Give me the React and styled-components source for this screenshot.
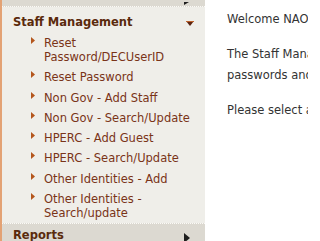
import React from "react";
import styled, {createGlobalStyle} from "styled-components";

const GlobalStyle = createGlobalStyle`
    html, body {
        margin: 0;
        padding: 0;
        background: #fff;
        overflow: hidden;
    }
    body {
        font-family: "DejaVu Sans", Verdana, sans-serif;
    }
`;

const Page = styled.div`
    display: flex;
    width: 308px;
    height: 241px;
    overflow: hidden;
`;

const Sidebar = styled.div`
    flex: 0 0 203px;
    background: #efeee9;
    border-left: 2px solid #e3a274;
    display: flex;
    flex-direction: column;
`;

const TopStrip = styled.div`
    position: relative;
    flex: 0 0 6px;
    background: #dcd9d1;
    border-bottom: 1px dotted #fbfaf7;
`;

const SectionHeader = styled.div`
    position: relative;
    flex: 0 0 auto;
    padding: ${props => (props.collapsed ? "3px 0 0 11px" : "7px 0 0 11px")};
    background: ${props => (props.collapsed ? "#dcd9d1" : "transparent")};
    border-top: ${props => (props.collapsed ? "1px dotted #fbfaf7" : "none")};
    font-size: 11.5px;
    line-height: 16px;
    font-weight: bold;
    color: #5a2a0c;
`;

const ArrowBox = styled.span`
    position: absolute;
    left: ${props => props.left}px;
    top: ${props => props.top}px;
    line-height: 0;
`;

const List = styled.ul`
    flex: 0 0 auto;
    list-style: none;
    margin: 0;
    padding: 3px 0 0 0;
`;

const Item = styled.li`
    display: flex;
    align-items: flex-start;
    gap: 9px;
    padding: 3px 0 3.25px 29px;
    font-size: 11.5px;
    line-height: 14px;
    color: #7a3418;
`;

const Bullet = styled.svg`
    flex: 0 0 4px;
    margin-top: 1px;
`;

const ItemText = styled.span`
    width: 148px;
`;

const Content = styled.div`
    flex: 1;
    padding: 9px 0 0 22px;
    font-size: 11.5px;
    line-height: 21px;
    color: #333;
    white-space: nowrap;
    overflow: hidden;
`;

const Para = styled.p`
    margin: 0 0 14px 0;
`;

const DownArrow = () => (
    <svg width="8" height="5" viewBox="0 0 8 5">
        <polygon points="0,0 8,0 4,5" fill="#5c2410" />
        <rect x="0" y="0" width="8" height="1" fill="#c0642c" />
    </svg>
);

const RightArrow = ({half}) =>
    half ? (
        <svg width="5" height="3" viewBox="0 0 5 3">
            <polygon points="0,0 5,0 0,3" fill="#1e1e1e" />
        </svg>
    ) : (
        <svg width="6" height="10" viewBox="0 0 6 10">
            <polygon points="0,0 6,5 0,10" fill="#1e1e1e" />
        </svg>
    );

const items = [
    "Reset Password/DECUserID",
    "Reset Password",
    "Non Gov - Add Staff",
    "Non Gov - Search/Update",
    "HPERC - Add Guest",
    "HPERC - Search/Update",
    "Other Identities - Add",
    "Other Identities - Search/update",
];

export default function App() {
    return (
        <>
            <GlobalStyle />
            <Page>
                <Sidebar>
                    <TopStrip>
                        <ArrowBox left={182} top={0}>
                            <RightArrow half />
                        </ArrowBox>
                    </TopStrip>
                    <SectionHeader>
                        Staff Management
                        <ArrowBox left={184} top={14}>
                            <DownArrow />
                        </ArrowBox>
                    </SectionHeader>
                    <List>
                        {items.map(label => (
                            <Item key={label}>
                                <Bullet width="4" height="7" viewBox="0 0 4 7">
                                    <polygon points="0,0 4,3.5 0,7" fill="#b4561c" />
                                </Bullet>
                                <ItemText>{label}</ItemText>
                            </Item>
                        ))}
                    </List>
                    <SectionHeader collapsed>
                        Reports
                        <ArrowBox left={182} top={9}>
                            <RightArrow />
                        </ArrowBox>
                    </SectionHeader>
                </Sidebar>
                <Content>
                    <Para>Welcome NAOMI SMITH</Para>
                    <Para>
                        The Staff Management menu allows you to reset
                        <br />
                        passwords and manage staff identities.
                    </Para>
                    <Para>Please select an option from the menu.</Para>
                </Content>
            </Page>
        </>
    );
}
